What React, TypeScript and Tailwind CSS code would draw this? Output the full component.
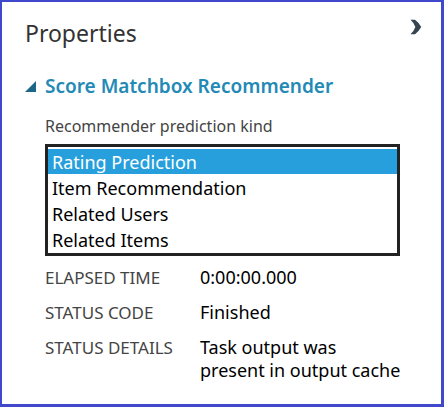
import { useState } from "react";

const kinds = ["Rating Prediction", "Item Recommendation", "Related Users", "Related Items"];

const details = [
  { label: "ELAPSED TIME", value: "0:00:00.000" },
  { label: "STATUS CODE", value: "Finished" },
  { label: "STATUS DETAILS", value: "Task output was\npresent in output cache" },
];

export default function App() {
  const [kind, setKind] = useState(kinds[0]);
  const [open, setOpen] = useState(true);

  return (
    <main className="min-h-screen border-2 border-r-3 border-b-3 border-[#4048cc] bg-white pr-[17px] pl-[23px] font-['Noto_Sans','Open_Sans',sans-serif] text-black">
      <header className="flex items-start justify-between pt-[15px]">
        <h1 className="text-[23px] leading-8 text-[#333]">Properties</h1>
        <button type="button" aria-label="Collapse panel" className="flex h-5 w-4 items-center justify-center">
          <svg width="12" height="16" viewBox="0 0 12 16" fill="#36454f" aria-hidden="true">
            <path d="M0.5 0.8H5Q8.8 3.5 11.2 8Q8.8 12.5 5 15.3H0.5Q4 12 5.4 8Q4 4 0.5 0.8Z" />
          </svg>
        </button>
      </header>

      <section className="pt-[25px]">
        <h2>
          <button
            type="button"
            aria-expanded={open}
            onClick={() => setOpen(!open)}
            className="flex items-center text-[19px] leading-6 font-semibold whitespace-nowrap text-[#2389b5]"
          >
            <svg className="mr-[9px]" width="11" height="11" viewBox="0 0 11 11" fill="#1d6688" aria-hidden="true">
              <path d="M0 11L11 0V11Z" />
            </svg>
            Score Matchbox Recommender
          </button>
        </h2>

        {open && (
          <div className="pr-6 pl-5">
            <label htmlFor="kind" className="block pt-4 text-base leading-6 text-[#444]">
              Recommender prediction kind
            </label>
            <select
              id="kind"
              size={4}
              value={kind}
              onChange={(e) => setKind(e.target.value)}
              className="mt-[6px] block w-full overflow-hidden border-3 border-[#222] bg-white pt-[2px] text-lg outline-none"
            >
              {kinds.map((k) => (
                <option
                  key={k}
                  className="h-[26px] border-b border-transparent bg-clip-padding px-1 pt-px pb-0 leading-[26px] text-black checked:bg-[#269fdc] checked:text-white"
                >
                  {k}
                </option>
              ))}
            </select>

            <dl className="-mr-4 grid grid-cols-[155px_1fr] gap-y-3 pt-[10px]">
              {details.map((d) => (
                <div key={d.label} className="contents">
                  <dt className="text-[17px] leading-[23px] text-[#444]">{d.label}</dt>
                  <dd className="text-lg leading-[23px] whitespace-pre-line">{d.value}</dd>
                </div>
              ))}
            </dl>
          </div>
        )}
      </section>
    </main>
  );
}
